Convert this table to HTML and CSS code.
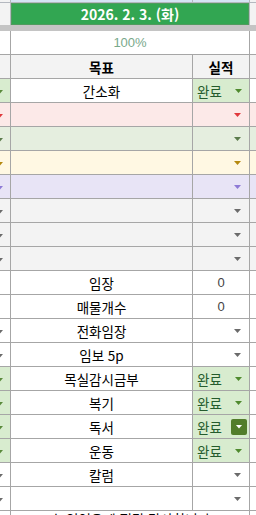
FILE: index.html
```html
<!DOCTYPE html>
<html lang="ko">
<head>
<meta charset="utf-8">
<link rel="stylesheet" href="styles.css">
</head>
<body>
<div class="sheet">
  <div class="top">
    <div class="c gray"></div><div class="c sky"></div><div class="c sky"></div><div class="c gray"></div>
    <div class="c gray"></div><div class="c date">2026. 2. 3. (화)</div><div class="c gray"></div>
  </div>
  <div class="band"></div>
  <div class="rows">
    <div class="row">
      <div class="c white"></div><div class="c white pct span2">100%</div><div class="c white"></div>
    </div>
    <div class="row bg-gray">
      <div class="c"></div><div class="c head">목표</div><div class="c head">실적</div><div class="c"></div>
    </div>
    <div class="row bg-white">
      <div class="c lead done-bg"><span class="tri t-green"></span></div><div class="c label">간소화</div><div class="c done done-bg">완료<span class="tri t-done"></span></div><div class="c"></div>
    </div>
    <div class="row bg-pink">
      <div class="c lead"><span class="tri t-red"></span></div><div class="c"></div><div class="c drop"><span class="tri t-red"></span></div><div class="c"></div>
    </div>
    <div class="row bg-mint">
      <div class="c lead"><span class="tri t-moss"></span></div><div class="c"></div><div class="c drop"><span class="tri t-moss"></span></div><div class="c"></div>
    </div>
    <div class="row bg-yellow">
      <div class="c lead"><span class="tri t-amber"></span></div><div class="c"></div><div class="c drop"><span class="tri t-amber"></span></div><div class="c"></div>
    </div>
    <div class="row bg-lav">
      <div class="c lead"><span class="tri t-purple"></span></div><div class="c"></div><div class="c drop"><span class="tri t-purple"></span></div><div class="c"></div>
    </div>
    <div class="row bg-gray">
      <div class="c lead"><span class="tri t-gray"></span></div><div class="c"></div><div class="c drop"><span class="tri t-gray"></span></div><div class="c"></div>
    </div>
    <div class="row bg-gray">
      <div class="c lead"><span class="tri t-gray"></span></div><div class="c"></div><div class="c drop"><span class="tri t-gray"></span></div><div class="c"></div>
    </div>
    <div class="row bg-gray">
      <div class="c lead"><span class="tri t-gray"></span></div><div class="c"></div><div class="c drop"><span class="tri t-gray"></span></div><div class="c"></div>
    </div>
    <div class="row bg-white">
      <div class="c"></div><div class="c label">임장</div><div class="c num">0</div><div class="c"></div>
    </div>
    <div class="row bg-white">
      <div class="c"></div><div class="c label">매물개수</div><div class="c num">0</div><div class="c"></div>
    </div>
    <div class="row bg-white">
      <div class="c lead"><span class="tri t-gray"></span></div><div class="c label">전화임장</div><div class="c drop"><span class="tri t-gray"></span></div><div class="c"></div>
    </div>
    <div class="row bg-white">
      <div class="c lead"><span class="tri t-gray"></span></div><div class="c label">임보 5p</div><div class="c drop"><span class="tri t-gray"></span></div><div class="c"></div>
    </div>
    <div class="row bg-white">
      <div class="c lead done-bg"><span class="tri t-green"></span></div><div class="c label">목실감시금부</div><div class="c done done-bg">완료<span class="tri t-done"></span></div><div class="c"></div>
    </div>
    <div class="row bg-white">
      <div class="c lead done-bg"><span class="tri t-green"></span></div><div class="c label">복기</div><div class="c done done-bg">완료<span class="tri t-done"></span></div><div class="c"></div>
    </div>
    <div class="row bg-white">
      <div class="c lead done-bg"><span class="tri t-green"></span></div><div class="c label">독서</div><div class="c done done-bg">완료<span class="btn"><span class="tri t-white"></span></span></div><div class="c"></div>
    </div>
    <div class="row bg-white">
      <div class="c lead done-bg"><span class="tri t-green"></span></div><div class="c label">운동</div><div class="c done done-bg">완료<span class="tri t-done"></span></div><div class="c"></div>
    </div>
    <div class="row bg-white">
      <div class="c lead"><span class="tri t-gray"></span></div><div class="c label">칼럼</div><div class="c drop"><span class="tri t-gray"></span></div><div class="c"></div>
    </div>
    <div class="row bg-white">
      <div class="c lead"><span class="tri t-gray"></span></div><div class="c"></div><div class="c drop"><span class="tri t-gray"></span></div><div class="c"></div>
    </div>
    <div class="row bg-white tall">
      <div class="c"></div><div class="c note span2">수 있었음에 정말 감사합니다</div><div class="c"></div>
    </div>
  </div>
</div>
</body>
</html>
```
FILE: styles.css
```css
html, body {
  margin: 0;
  padding: 0;
  width: 256px;
  height: 515px;
  overflow: hidden;
  background: #ffffff;
}
.sheet {
  width: 256px;
  font-family: "Noto Sans CJK KR", "Noto Sans", sans-serif;
  font-size: 13.5px;
  color: #000;
}
.top {
  display: grid;
  grid-template-columns: 10px 181px 56px 6px;
  grid-template-rows: 2px 22px;
  gap: 1px;
  background: #b4b8bf;
}
.c {
  min-width: 0;
}
.gray { background: #f3f3f3; }
.sky { background: #d6e4f4; }
.white { background: #ffffff; }
.date {
  grid-column: span 2;
  background: #32a652;
  box-shadow: inset 0 0 0 1px #4f9b5e;
  color: #fff;
  font-weight: bold;
  font-size: 14px;
  display: flex;
  align-items: center;
  justify-content: center;
  line-height: 1;
}
.band {
  height: 6px;
  background: #c4c4c4;
}
.rows {
  display: flex;
  flex-direction: column;
  gap: 1px;
  background: #a6a6a6;
}
.row {
  display: grid;
  grid-template-columns: 10px 181px 56px 6px;
  column-gap: 1px;
  height: 23px;
  background: #a6a6a6;
}
.row.tall { height: 30px; }
.span2 { grid-column: span 2; }
.bg-white > .c { background-color: #ffffff; }
.bg-gray > .c { background-color: #f3f3f3; }
.bg-pink > .c { background-color: #fce9e8; }
.bg-mint > .c { background-color: #e5eedf; }
.bg-yellow > .c { background-color: #fff8e3; }
.bg-lav > .c { background-color: #e8e4f6; }
.row > .c.done-bg { background-color: #d8eccf; }
.pct {
  display: flex;
  align-items: center;
  justify-content: center;
  font-family: "Liberation Sans", Arial, sans-serif;
  font-size: 13px;
  color: #79a98b;
}
.head {
  display: flex;
  align-items: center;
  justify-content: center;
  font-weight: bold;
}
.label {
  display: flex;
  align-items: center;
  justify-content: center;
}
.num {
  display: flex;
  align-items: center;
  justify-content: center;
  font-family: "Liberation Sans", Arial, sans-serif;
  font-size: 13px;
  color: #444;
}
.note {
  text-align: center;
  line-height: 16px;
  padding-top: 0;
}
.lead {
  position: relative;
  overflow: hidden;
}
.lead .tri {
  position: absolute;
  left: -4px;
  top: 10px;
}
.drop {
  display: flex;
  align-items: center;
  justify-content: flex-end;
  padding-right: 8px;
}
.done {
  display: flex;
  align-items: center;
  justify-content: space-between;
  padding: 0 7px 0 4px;
  color: #245b2d;
}
.tri {
  display: block;
  width: 7px;
  height: 4px;
  clip-path: polygon(0 0, 100% 0, 50% 100%);
  margin-top: 1px;
}
.t-green { background: #5a8a3c; }
.t-done { background: #4f8a2e; }
.t-red { background: #e0393d; }
.t-moss { background: #5b7b4c; }
.t-amber { background: #b5890f; }
.t-purple { background: #8e7ad6; }
.t-gray { background: #6b6b6b; }
.t-white { background: #ffffff; margin-top: 0; }
.btn {
  width: 16px;
  height: 16px;
  margin-right: -5px;
  border-radius: 2px;
  background: #527d2b;
  display: flex;
  align-items: center;
  justify-content: center;
}
```
